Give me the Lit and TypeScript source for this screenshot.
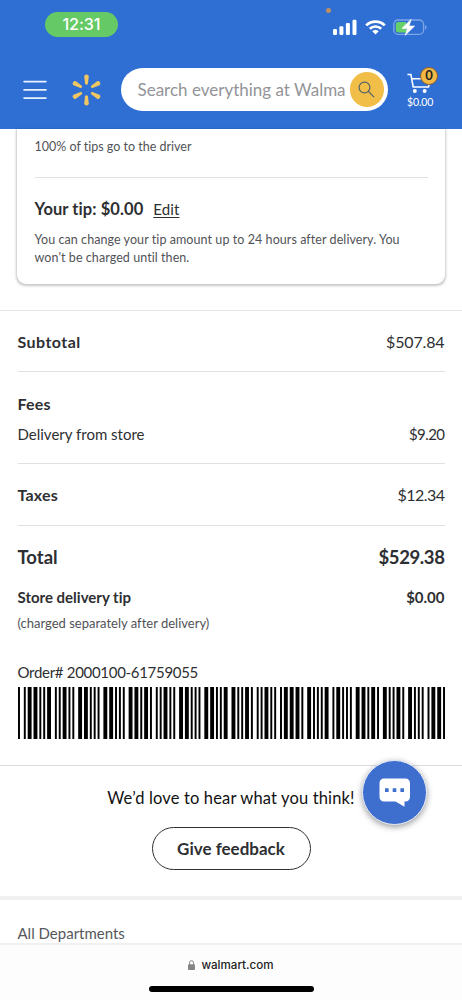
import { LitElement, html, css, svg } from "lit";
import { customElement, property } from "lit/decorators.js";

// Code 39: alternating bars and spaces, n = narrow, w = wide
const CODE39: Record<string, string> = {
  "0": "nnnwwnwnn", "1": "wnnwnnnnw", "2": "nnwwnnnnw", "3": "wnwwnnnnn",
  "4": "nnnwwnnnw", "5": "wnnwwnnnn", "6": "nnwwwnnnn", "7": "nnnwnnwnw",
  "8": "wnnwnnwnn", "9": "nnwwnnwnn", "*": "nwnnwnwnn",
};

@customElement("order-barcode")
class OrderBarcode extends LitElement {
  @property() value = "";
  static styles = css`
    :host { display: block; }
    svg { display: block; width: 100%; height: 100%; }
  `;
  render() {
    let x = 0;
    const bars: { x: number; w: number }[] = [];
    for (const ch of `*${this.value}*`) {
      [...CODE39[ch]].forEach((c, i) => {
        const w = c === "w" ? 2 : 1;
        if (i % 2 === 0) bars.push({ x, w });
        x += w;
      });
      x += 1;
    }
    return html`<svg viewBox="0 0 ${x - 1} 52" preserveAspectRatio="none">
      ${bars.map((b) => svg`<rect x=${b.x} y="0" width=${b.w} height="52" fill="#000" />`)}
    </svg>`;
  }
}

@customElement("app-root")
class AppRoot extends LitElement {
  static styles = css`
    :host {
      display: flex; flex-direction: column; position: relative;
      width: 462px; height: 1000px; overflow: hidden; background: #fff;
      font-family: Lato, "Liberation Sans", sans-serif; color: #2e2f32;
      font-size: 15px; white-space: nowrap; font-variant-ligatures: none;
    }
    * { box-sizing: border-box; }
    svg { display: block; flex: none; }
    .header { flex: none; height: 128.5px; background: #2f6fd4; }
    .status { height: 66px; display: flex; align-items: flex-start; padding: 12px 35px 0 45px; position: relative; }
    .time {
      width: 73px; height: 24.5px; border-radius: 13px; background: #65ca66; color: #fff;
      font: 500 16.2px/25px Inter, sans-serif; letter-spacing: -0.1px; text-align: center;
    }
    .mic { position: absolute; left: 325.5px; top: 7.5px; width: 5px; height: 5px; border-radius: 50%; background: #bd8f62; }
    .icons { margin-left: auto; display: flex; gap: 7.5px; padding-top: 7px; }
    .nav { display: flex; align-items: center; height: 47px; padding: 0 22px 0 22.5px; }
    .logo { margin-left: 25px; }
    .search {
      margin-left: 20px; width: 267.5px; height: 43.5px; border-radius: 22px; background: #fff;
      display: flex; align-items: center; justify-content: space-between; padding: 0 4px 0 17px;
      color: #939498; font-size: 17px;
    }
    .go { flex: none; width: 34.5px; height: 34.5px; border-radius: 50%; background: #f1bf48; display: flex; align-items: center; justify-content: center; }
    .cart { position: relative; margin-left: 19px; width: 33px; height: 43px; display: flex; flex-direction: column; color: #fff; }
    .cart .sum { font-size: 10.5px; line-height: 14px; margin-top: 0; letter-spacing: -0.1px; }
    .badge {
      position: absolute; left: 13px; top: -1px; width: 18px; height: 18px; border-radius: 50%;
      background: #f1b943; border: 1px solid #8a5b33; color: #222; font-size: 13px; font-weight: 700; line-height: 15.5px; text-align: center;
    }
    .card {
      flex: none; margin: 0 17px; height: 155.5px; padding: 0 17.5px; border-radius: 0 0 9px 9px;
      box-shadow: 0 1px 2.5px 0.5px #00000038; font-size: 12.5px; line-height: 18px; color: #515357;
    }
    .note { height: 49px; padding-top: 9.5px; border-bottom: 1px solid #e2e2e2; }
    .tip { display: flex; align-items: baseline; gap: 10px; height: 53px; line-height: 24px; padding-top: 19.5px; color: #2e2f32; }
    .tip b { font-size: 16.5px; letter-spacing: 0.08px; }
    .edit { font-size: 15px; text-decoration: underline; text-decoration-thickness: 1px; text-underline-offset: 2px; letter-spacing: 0.1px; }
    .fine { letter-spacing: 0.07px; }
    .totals { flex: none; margin-top: 26px; border-top: 1.5px solid #e4e4e4; padding: 0 17.5px; }
    .row { display: flex; justify-content: space-between; align-items: center; }
    .line { border-bottom: 1px solid #e0e0e0; }
    b { font-weight: 700; }
    .h { font-size: 16px; }
    b.h { letter-spacing: 0.2px; }
    .wide { letter-spacing: 0.45px !important; }
    .amount { letter-spacing: -0.15px; }
    .tight { letter-spacing: -0.55px; }
    .total { font-size: 18.5px; }
    b.amount { letter-spacing: -0.4px; }
    .order { margin-top: 22px; height: 24px; line-height: 24px; font-size: 15px; letter-spacing: -0.3px; }
    order-barcode { height: 52px; margin-top: 2.5px; }
    .feedback { flex: none; margin-top: 26px; height: 131px; border-top: 1px solid #dcdcdc; display: flex; flex-direction: column; align-items: center; color: #111; }
    .love { margin-top: 20px; height: 24px; line-height: 24px; font-size: 16.5px; letter-spacing: 0.15px; }
    .btn { margin-top: 17.5px; width: 159px; height: 43px; border: 1px solid #2e2f32; border-radius: 22px; font-size: 17px; font-weight: 700; line-height: 42px; text-align: center; color: #2e2f32; }
    .footer { flex: none; border-top: 4px solid #f0f0f0; height: 47px; padding: 20px 17.5px 0; font-size: 15px; line-height: 26px; color: #55575b; }
    .bar { flex: none; height: 57px; border-top: 2px solid #f0f0f0; background: #fdfdfd; display: flex; flex-direction: column; align-items: center; }
    .url { display: flex; align-items: center; gap: 6px; height: 18px; margin: 11.5px 0 0; font: 500 11.6px/18px Inter, sans-serif; color: #222; }
    .home { margin-top: 12px; width: 165px; height: 5.5px; border-radius: 3px; background: #000; }
    .chat {
      position: absolute; left: 362px; top: 760px; width: 65px; height: 65px; border-radius: 50%;
      background: #3f6fce; border: 1.5px solid #e8eefb; box-shadow: 0 2px 6px #00000066;
      display: flex; align-items: center; justify-content: center;
    }
    .r1 { height: 61px; }
    .r2 { height: 32px; margin-top: 15px; }
    .r3 { height: 31px; padding-bottom: 1px; }
    .r3b { height: 14px; }
    .r4 { height: 62px; }
    .r5 { height: 61px; }
    .r6 { height: 20px; }
    .r7 { height: 31px; font-size: 13px; color: #515357; }
  `;

  render() {
    return html`
      <div class="header">
        <div class="status">
          <div class="time">12:31</div>
          <div class="mic"></div>
          <div class="icons">
            <svg width="24" height="17" viewBox="0 0 24 17" fill="#fff">
              <rect x="0" y="10" width="4" height="6" rx="1.2" /><rect x="6.4" y="7.3" width="4" height="8.7" rx="1.2" />
              <rect x="12.9" y="4" width="4" height="12" rx="1.2" /><rect x="19.5" y="0.8" width="4" height="15.2" rx="1.2" />
            </svg>
            <svg width="21" height="17" viewBox="0 0 21 17" fill="none" stroke="#fff" stroke-width="2.7">
              <path d="M1.2 6.4a13.3 13.3 0 0 1 18.6 0M4.8 9.8a8.2 8.2 0 0 1 11.4 0" />
              <path d="M10.5 15.4 7.2 12.2a4.8 4.8 0 0 1 6.6 0z" fill="#fff" stroke="none" />
            </svg>
            <svg width="34" height="17" viewBox="0 0 34 17">
              <rect x="0.8" y="1" width="29.8" height="14.4" rx="4.4" fill="none" stroke="#7ea5e5" stroke-width="1.3" />
              <path d="M32 6v4.6c2-.8 2-3.8 0-4.6z" fill="#7ea5e5" />
              <path d="M5.2 3H13v10.4H5.2A2.4 2.4 0 0 1 2.8 11V5.4A2.4 2.4 0 0 1 5.2 3z" fill="#65d069" />
              <path d="M18.2.3 8.8 9.4h5.4l-2 6.9L21.6 7h-5.5z" fill="#fff" stroke="#fff" stroke-width=".6" />
            </svg>
          </div>
        </div>
        <div class="nav">
          <svg width="24" height="20" viewBox="0 0 24 20" stroke="#e9f1fd" stroke-width="1.6" stroke-linecap="round">
            <path d="M1 1.6h22M1 9.9h22M1 18.1h22" />
          </svg>
          <svg class="logo" width="29" height="32" viewBox="-14.5 -16 29 32" fill="#efc661">
            ${[0, 60, 120, 180, 240, 300].map(
              (a) => svg`<path transform="rotate(${a})" d="M-1.4-6.2-2.3-13.6q.1-1.9 2.3-1.9t2.3 1.9L1.4-6.2q-.3.9-1.4.9t-1.4-.9z" />`
            )}
          </svg>
          <div class="search">
            <span>Search everything at Walma</span>
            <div class="go">
              <svg width="17" height="17" viewBox="0 0 17 17" fill="none" stroke="#53636c" stroke-width="1.2" stroke-linecap="round">
                <circle cx="6.5" cy="6.5" r="5.4" /><path d="m10.5 10.5 5.3 5.3" />
              </svg>
            </div>
          </div>
          <div class="cart">
            <svg width="26" height="27" viewBox="0 0 26 27" fill="none" stroke="#fff" stroke-width="1.5">
              <path d="M.4 6.5h3.5L6.2 19H21.5L22.7 13.5M4.9 10.7h12" />
              <circle cx="7.8" cy="23" r="2" fill="#fff" stroke="none" /><circle cx="17.6" cy="23" r="2" fill="#fff" stroke="none" />
            </svg>
            <div class="badge">0</div>
            <div class="sum">$0.00</div>
          </div>
        </div>
      </div>

      <div class="card">
        <div class="note"><span>100% of tips go to the driver</span></div>
        <div class="tip"><b>Your tip: $0.00</b><span class="edit">Edit</span></div>
        <div class="fine">You can change your tip amount up to 24 hours after delivery. You<br />won't be charged until then.</div>
      </div>

      <div class="totals">
        <div class="row line r1"><b class="h wide">Subtotal</b><span class="h amount">$507.84</span></div>
        <div class="row r2"><b class="h">Fees</b></div>
        <div class="row r3"><span>Delivery from store</span><span class="tight">$9.20</span></div>
        <div class="line r3b"></div>
        <div class="row line r4"><b class="h">Taxes</b><span class="h tight">$12.34</span></div>
        <div class="row r5"><b class="total">Total</b><b class="total amount">$529.38</b></div>
        <div class="row r6"><b>Store delivery tip</b><b>$0.00</b></div>
        <div class="row r7"><span>(charged separately after delivery)</span></div>
        <div class="order">Order# 2000100-61759055</div>
        <order-barcode value="200010061759055"></order-barcode>
      </div>

      <div class="feedback">
        <div class="love">We’d love to hear what you think!</div>
        <div class="btn">Give feedback</div>
      </div>
      <div class="footer">All Departments</div>
      <div class="bar">
        <div class="url">
          <svg width="7" height="10" viewBox="0 0 7 10"><rect y="4.2" width="7" height="5.8" rx="1" fill="#858585" /><path d="M1.5 4.5V2.7a2 2 0 0 1 4 0v1.8" fill="none" stroke="#858585" /></svg>
          <span>walmart.com</span>
        </div>
        <div class="home"></div>
      </div>

      <div class="chat">
        <svg width="32" height="29" viewBox="0 0 32 29">
          <path d="M5 .5h21.5a4.5 4.5 0 0 1 4.5 4.5v14a4.5 4.5 0 0 1-4.5 4.5H25.5v5.3L16.5 23.5H5A4.5 4.5 0 0 1 .5 19V5A4.5 4.5 0 0 1 5 .5z" fill="#fff" />
          <path d="M6 10.3h3.6v3.6H6zM13.7 10.3h3.6v3.6h-3.6zM21.4 10.3H25v3.6h-3.6z" fill="#3f6fce" />
        </svg>
      </div>
    `;
  }
}
